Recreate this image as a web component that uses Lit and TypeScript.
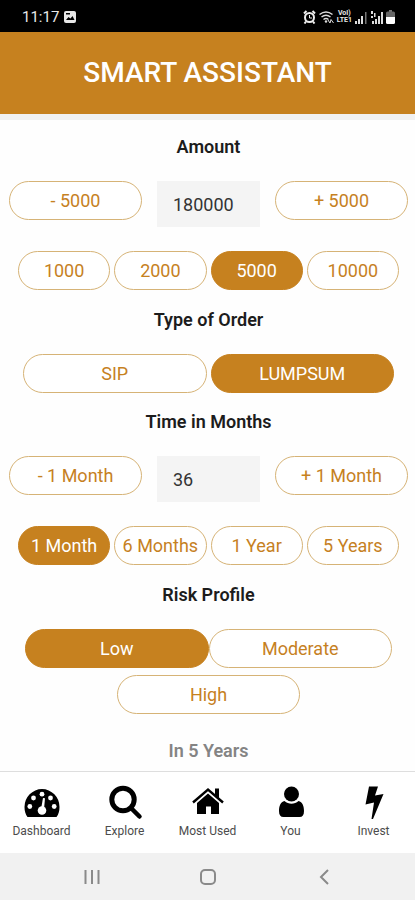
import { LitElement, html, css, svg } from "lit";
import { customElement, state } from "lit/decorators.js";
import { classMap } from "lit/directives/class-map.js";

const NAV = [
  {
    label: "Dashboard",
    icon: svg`<path d="M3.500 33C1.500 30.500.5 27 .5 23a17.500 18 0 0 1 35 0c0 4-1 7.500-3 10z"/>
      <g fill="#fff"><circle cx="5.800" cy="22.500" r="2.400"/><circle cx="9.500" cy="14" r="2.400"/><circle cx="18" cy="10.200" r="2.400"/><circle cx="26.500" cy="14" r="2.400"/><circle cx="30.200" cy="22.500" r="2.400"/>
      <circle cx="18" cy="26.500" r="4.300"/><path d="M19 14l2 .3-1 11h-3z"/></g>`,
  },
  {
    label: "Explore",
    icon: svg`<circle cx="16" cy="15.500" r="11.200" fill="none" stroke="#000" stroke-width="5"/><path d="M24 24l8.500 8.500" stroke="#000" stroke-width="4.500" stroke-linecap="round"/>`,
  },
  {
    label: "Most Used",
    icon: svg`<path d="M18 9.500l11 9.500v11h-8v-7.500h-5V30H7V19z"/><path d="M25 4.500h4v10l-4-3.500z"/><path d="M3 18.500L18 5.500l15 13" fill="none" stroke="#000" stroke-width="2.400"/>`,
  },
  {
    label: "You",
    icon: svg`<circle cx="18.500" cy="10" r="7.500"/><path d="M11.500 17c4 3.500 10 3.500 14 0 4 1 5.500 5 5.500 10 0 4-1.500 6-4.500 6H10.500c-3 0-4.500-2-4.500-6 0-5 1.500-9 5.500-10z"/>`,
  },
  {
    label: "Invest",
    icon: svg`<path d="M13 2.500h9L19 11.500l8.500-1.500L17 35h-1.500l2.500-16.500-8.500 2z"/>`,
  },
];

@customElement("app-root")
export class AppRoot extends LitElement {
  @state() private amount = 180000;
  @state() private months = 36;
  @state() private amountPick = "5000";
  @state() private order = "LUMPSUM";
  @state() private period = "1 Month";
  @state() private risk = "Low";

  static styles = css`
    :host {
      display: flex;
      flex-direction: column;
      min-height: 100vh;
      background: #fefefe;
      font-family: Roboto, "Liberation Sans", sans-serif;
      color: #1c1c1c;
    }
    * { box-sizing: border-box; }
    svg { display: block; flex: none; }
    button, input { font: inherit; margin: 0; }
    .status {
      display: flex;
      align-items: center;
      gap: 4px;
      height: 32px;
      padding: 2px 20px 0 22px;
      background: #000;
      color: #e8e8e8;
      font-size: 15px;
    }
    .signals { display: flex; align-items: center; gap: 3px; margin-left: auto; }
    .volte { font-size: 7px; line-height: 7px; font-weight: 700; text-align: center; }
    .header {
      background: #c6811f;
      border-bottom: 6px solid #f1f1f1;
      height: 88px;
      display: flex;
      align-items: center;
      justify-content: center;
    }
    h1 { margin: 0; color: #fff; font-size: 28px; line-height: 32px; font-weight: 500; }
    main {
      flex: 1;
      display: flex;
      flex-direction: column;
      padding: 15px 7px 6px 9px;
    }
    .title {
      display: block;
      margin: 0 0 22px;
      font-size: 18px;
      line-height: 24px;
      font-weight: 600;
      text-align: center;
    }
    .result { margin: 25px 0 0; color: #848484; }
    .stepper { display: grid; grid-template-columns: 133fr 103fr 133fr; gap: 15px; align-items: start; margin-bottom: 24px; }
    .field {
      width: 100%;
      height: 46px;
      border: 0;
      border-radius: 0;
      padding: 0 16px;
      background: #f4f4f4;
      color: #333;
      font-size: 18px;
    }
    .pill {
      height: 39px;
      border: 1px solid #d6b376;
      border-radius: 20px;
      padding: 0;
      background: #fff;
      color: #c6811f;
      font-size: 18px;
      line-height: 24px;
      white-space: nowrap;
    }
    .on { background: #c6811f; border-color: #c6811f; color: #fff; }
    .choices { display: grid; gap: 4px; margin: 0 9px 18px; }
    .four { grid-template-columns: repeat(4, 1fr); }
    .two { grid-template-columns: 1fr 1fr; margin: 0 14px 17px; }
    .risks { display: flex; flex-wrap: wrap; justify-content: center; row-gap: 7px; margin: 0 16px; }
    .risks .pill { width: 50%; }
    nav { display: grid; grid-template-columns: repeat(5, 1fr); height: 82px; border-top: 1px solid #dedede; background: #fff; }
    .tab {
      display: flex;
      flex-direction: column;
      align-items: center;
      gap: 3px;
      padding-top: 12px;
      color: #4c4c4c;
      font-size: 12px;
      line-height: 16px;
      text-decoration: none;
    }
    .system { display: flex; justify-content: center; align-items: center; gap: 84px; height: 47px; background: #f1f1f1; }
    .key { border: 0; padding: 7px 8px; background: none; }
  `;

  private pill(label: string, on: boolean, pick: () => void) {
    return html`<button type="button" class=${classMap({ pill: true, on })} aria-pressed=${on} @click=${pick}>${label}</button>`;
  }

  render() {
    return html`
      <div class="status">
        <span>11:17</span>
        <svg width="14" height="14" viewBox="0 0 14 14"><rect x="1" y="1" width="12" height="12" rx="2" fill="#e8e8e8"/><path d="M3 10l2.500-3 2 1.500 2-2.500 2 4z" fill="#000"/><path d="M3 3h4v1.500H3z" fill="#000"/></svg>
        <div class="signals">
          <svg width="13" height="14" viewBox="0 0 13 14"><g fill="none" stroke="#eee"><circle cx="6.500" cy="7.500" r="4.500" stroke-width="2"/><path d="M1 3.500L3.500 1M12 3.500L9.500 1M3 11.500l-1.500 2M10 11.500l1.500 2" stroke-width="2"/><path d="M6.500 5v3h2.500"/></g></svg>
          <svg width="15" height="14" viewBox="0 0 15 14"><g fill="none" stroke="#ddd" stroke-width="1.500"><path d="M.5 4.500q6.500-5 13 0M2.500 7q4.500-3.500 9 0M4.500 9.500q2.500-2 5 0"/></g><circle cx="7" cy="11.500" r="1.200" fill="#ddd"/><path d="M9 10l2 3 1-3.500 2.500 3.500" fill="none" stroke="#ddd"/></svg>
          <span class="volte">VoI)<br />LTE1</span>
          <svg width="12" height="13" viewBox="0 0 12 13"><path d="M0 10h2v3H0zM3 8h2v5H3zM6 5h2v8H6z" fill="#ddd"/><path d="M10 1h1.500v12H10z" fill="#777"/></svg>
          <svg width="13" height="13" viewBox="0 0 13 13"><path d="M1 0h2v3H1zM4 2h1.500v4H4zM1 5h2v2H1zM2 10h2v3H2zM5 8h2v5H5zM8 5h2v8H8zM11 1h2v12h-2z" fill="#ddd"/></svg>
          <svg width="9" height="14" viewBox="0 0 9 14"><path d="M3 0h3v2H3z" fill="#777"/><path d="M0 3q0-1.500 1.500-1.500h6Q9 1.500 9 3v4H0z" fill="#666"/><path d="M0 7h9v5.500q0 1.500-1.500 1.500h-6Q0 14 0 12.500z" fill="#fff"/></svg>
        </div>
      </div>
      <header class="header"><h1>SMART ASSISTANT</h1></header>
      <main>
        <label class="title" for="amount">Amount</label>
        <div class="stepper">
          <button type="button" class="pill" @click=${() => (this.amount -= 5000)}>- 5000</button>
          <input id="amount" class="field" inputmode="numeric" .value=${String(this.amount)} @change=${(e: Event) => (this.amount = Number((e.target as HTMLInputElement).value))} />
          <button type="button" class="pill" @click=${() => (this.amount += 5000)}>+ 5000</button>
        </div>
        <div class="choices four">
          ${["1000", "2000", "5000", "10000"].map((v) => this.pill(v, v === this.amountPick, () => (this.amountPick = v)))}
        </div>
        <h2 class="title">Type of Order</h2>
        <div class="choices two">
          ${["SIP", "LUMPSUM"].map((v) => this.pill(v, v === this.order, () => (this.order = v)))}
        </div>
        <label class="title" for="months">Time in Months</label>
        <div class="stepper">
          <button type="button" class="pill" @click=${() => (this.months -= 1)}>- 1 Month</button>
          <input id="months" class="field" inputmode="numeric" .value=${String(this.months)} @change=${(e: Event) => (this.months = Number((e.target as HTMLInputElement).value))} />
          <button type="button" class="pill" @click=${() => (this.months += 1)}>+ 1 Month</button>
        </div>
        <div class="choices four">
          ${["1 Month", "6 Months", "1 Year", "5 Years"].map((v) => this.pill(v, v === this.period, () => (this.period = v)))}
        </div>
        <h2 class="title">Risk Profile</h2>
        <div class="risks">
          ${["Low", "Moderate", "High"].map((v) => this.pill(v, v === this.risk, () => (this.risk = v)))}
        </div>
        <h2 class="title result">In 5 Years</h2>
      </main>
      <nav aria-label="Main">
        ${NAV.map((n) => html`<a class="tab" href="#"><svg width="36" height="36" viewBox="0 0 36 36">${n.icon}</svg>${n.label}</a>`)}
      </nav>
      <div class="system">
        <button type="button" class="key" aria-label="Recent apps"><svg width="16" height="16" viewBox="0 0 16 16"><path d="M1.500 1v14M8 1v14M14.500 1v14" stroke="#8a8a8a" stroke-width="2"/></svg></button>
        <button type="button" class="key" aria-label="Home"><svg width="16" height="16" viewBox="0 0 16 16"><rect x="1" y="1" width="14" height="14" rx="4" fill="none" stroke="#8a8a8a" stroke-width="2"/></svg></button>
        <button type="button" class="key" aria-label="Back"><svg width="16" height="16" viewBox="0 0 16 16"><path d="M12 1L5 8l7 7" fill="none" stroke="#8a8a8a" stroke-width="2"/></svg></button>
      </div>
    `;
  }
}
